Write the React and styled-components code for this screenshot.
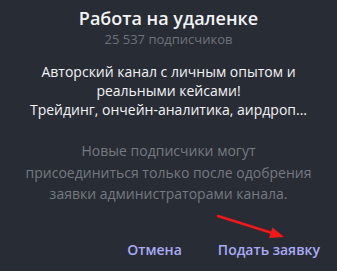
import React from "react";
import styled, { createGlobalStyle } from "styled-components";

const GlobalStyle = createGlobalStyle`
  html, body {
    margin: 0;
    padding: 0;
    background: #282c34;
  }
  body {
    font-family: "Open Sans", "Noto Sans", sans-serif;
  }
`;

const Dialog = styled.div`
  position: relative;
  width: 337px;
  height: 271px;
  box-sizing: border-box;
  background: #282c34;
  display: flex;
  flex-direction: column;
  align-items: center;
  padding-top: 6px;
`;

const Title = styled.h2`
  margin: 0;
  font-size: 18px;
  font-weight: 600;
  line-height: 24px;
  color: #f2f3f5;
`;

const Subtitle = styled.div`
  font-size: 13px;
  line-height: 18px;
  color: #6e737b;
`;

const About = styled.p`
  margin: 14px 0 0;
  padding: 0 20px;
  font-size: 14px;
  line-height: 19px;
  color: #f2f3f5;
  text-align: center;
`;

const Notice = styled.p`
  margin: 21px 0 0;
  padding: 0 24px;
  font-size: 14px;
  line-height: 21.5px;
  color: #757a82;
  text-align: center;
`;

const Actions = styled.div`
  margin-top: auto;
  align-self: stretch;
  display: flex;
  justify-content: flex-end;
  gap: 36px;
  padding: 0 17px 11px;
`;

const Action = styled.button`
  border: 0;
  background: none;
  padding: 0;
  font-family: inherit;
  font-size: 14px;
  font-weight: 600;
  line-height: 20px;
  color: #a8aaf4;
  cursor: pointer;
`;

const Arrow = styled.svg`
  position: absolute;
  left: 212px;
  top: 208px;
`;

export default function App() {
  return (
    <>
      <GlobalStyle />
      <Dialog>
        <Title>Работа на удаленке</Title>
        <Subtitle>25 537 подписчиков</Subtitle>
        <About>
          Авторский канал с личным опытом и реальными кейсами!
          <br />
          Трейдинг, ончейн-аналитика, аирдроп...
        </About>
        <Notice>
          Новые подписчики могут присоединиться только после одобрения заявки
          администраторами канала.
        </Notice>
        <Actions>
          <Action>Отмена</Action>
          <Action>Подать заявку</Action>
        </Actions>
        <Arrow width="80" height="40" viewBox="0 0 80 40">
          <line x1="6" y1="8" x2="60" y2="25" stroke="#f01818" strokeWidth="2.6" strokeLinecap="round" />
          <polygon points="72,29 57,30 60.5,19.5" fill="#f01818" />
        </Arrow>
      </Dialog>
    </>
  );
}
